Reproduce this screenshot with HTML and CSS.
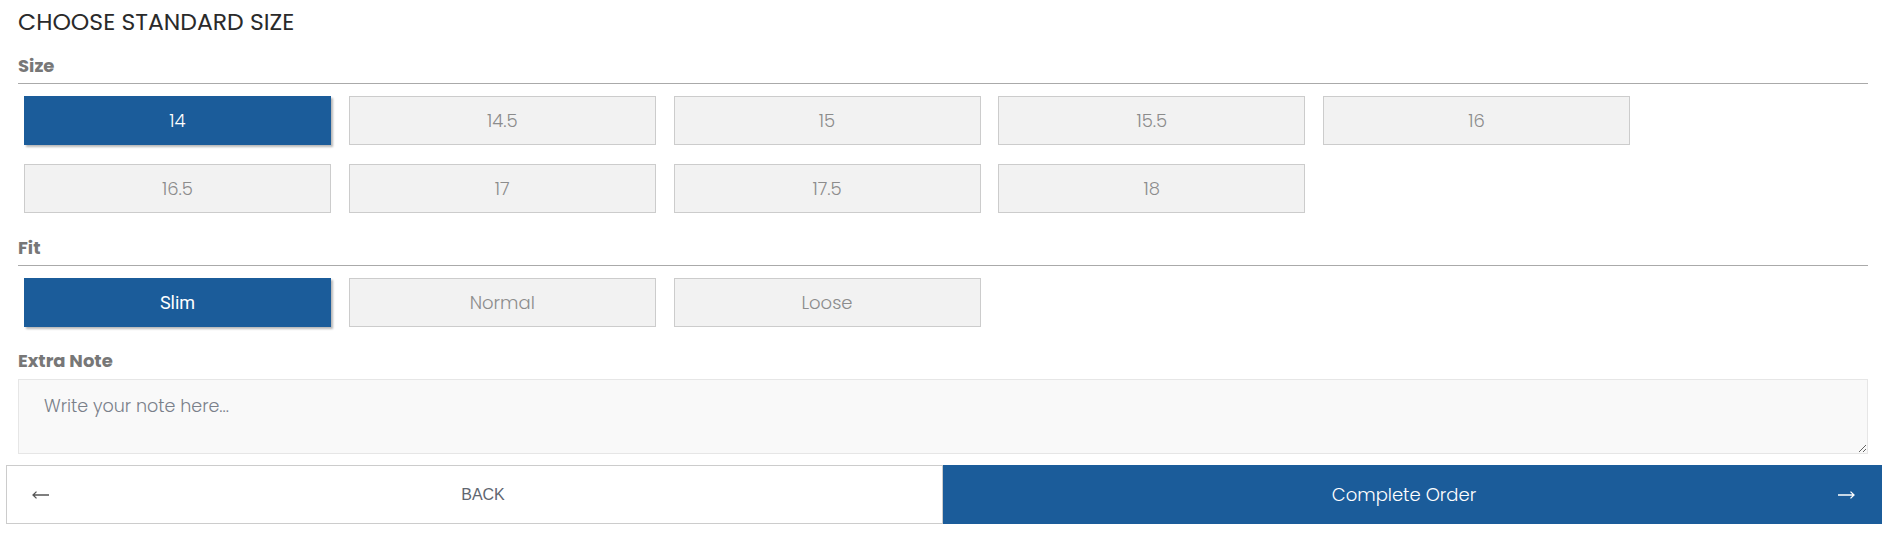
FILE: index.html
```html
<!DOCTYPE html>
<html>
<head>
<meta charset="utf-8">
<link rel="stylesheet" href="styles.css">
</head>
<body>
<div class="page">
  <h2 class="title">CHOOSE STANDARD SIZE</h2>
  <div class="label first">Size</div>
  <div class="options">
    <button class="opt active">14</button>
    <button class="opt">14.5</button>
    <button class="opt">15</button>
    <button class="opt">15.5</button>
    <button class="opt">16</button>
    <button class="opt">16.5</button>
    <button class="opt">17</button>
    <button class="opt">17.5</button>
    <button class="opt">18</button>
  </div>
  <div class="label">Fit</div>
  <div class="options">
    <button class="opt active alt">Slim</button>
    <button class="opt">Normal</button>
    <button class="opt">Loose</button>
  </div>
  <div class="label plain">Extra Note</div>
  <textarea class="note" placeholder="Write your note here..."></textarea>
</div>
<div class="actions">
  <button class="back">
    <svg class="arrow" width="17" height="10" viewBox="0 0 17 10"><path d="M17 5H1.2M4.5 1.6L1 5l3.5 3.4" fill="none" stroke="#555" stroke-width="1.3"/></svg>
    <span class="btxt">BACK</span>
  </button>
  <button class="done">
    <span class="btxt">Complete Order</span>
    <svg class="arrow" width="17" height="10" viewBox="0 0 17 10"><path d="M0 5h15.8M12.5 1.6L16 5l-3.5 3.4" fill="none" stroke="#fff" stroke-width="1.3"/></svg>
  </button>
</div>
</body>
</html>
```
FILE: styles.css
```css
* { box-sizing: border-box; }
body {
  margin: 0;
  font-family: "Poppins", "Inter", "Open Sans", sans-serif;
  background: #fff;
}
.page {
  padding: 7px 18px 0 18px;
  display: flex;
  flex-direction: column;
}
.title {
  margin: 0;
  font-size: 23.5px;
  line-height: 30px;
  font-weight: 400;
  color: #2a2a2a;
}
.label {
  margin-top: 23px;
  font-size: 18px;
  line-height: 24px;
  font-weight: 700;
  color: #777;
  padding-bottom: 5px;
  border-bottom: 1px solid #aaa;
}
.label.first { margin-top: 17px; }
.label.plain {
  margin-top: 22px;
  border-bottom: none;
  padding-bottom: 0;
}
.options {
  margin-top: 12px;
  padding-left: 6px;
  display: grid;
  grid-template-columns: repeat(5, 307px);
  column-gap: 17.75px;
  row-gap: 19px;
}
.opt {
  height: 49px;
  border: 1px solid #ccc;
  background: #f2f2f2;
  color: #8c8c8c;
  font-family: "Poppins", "Inter", "Open Sans", sans-serif;
  font-size: 18px;
  font-weight: 300;
  padding: 0;
}
.opt.active {
  background: #1b5c9a;
  border-color: #1b5c9a;
  color: #fff;
  box-shadow: 2px 2px 2px rgba(0, 0, 0, 0.28);
}
.opt.alt {
  font-family: "Roboto", "Liberation Sans", sans-serif;
  font-weight: 400;
  font-size: 18px;
}
.note {
  margin-top: 6px;
  height: 75px;
  width: 100%;
  background: #f9f9f9;
  border: 1px solid #e6e6e6;
  padding: 13px 25px;
  font-family: "Poppins", "Inter", "Open Sans", sans-serif;
  font-size: 17.5px;
  font-weight: 300;
  resize: vertical;
  outline: none;
}
.note::placeholder { color: #7a808a; }
.actions {
  margin: 11px 4px 0 6px;
  display: flex;
  height: 59px;
}
.back, .done {
  flex: 1;
  display: flex;
  align-items: center;
  margin: 0;
}
.back {
  padding: 0 25px 0 25px;
  background: #fff;
  border: 1px solid #ccc;
  color: #5f6670;
  font-family: "Liberation Sans", Arial, sans-serif;
  font-size: 16px;
}
.done {
  padding: 0 27px 0 27px;
  background: #1b5c9a;
  border: none;
  color: #fff;
  font-family: "Poppins", "Inter", "Open Sans", sans-serif;
  font-weight: 300;
  font-size: 18px;
}
.btxt { flex: 1; text-align: center; }
.arrow { display: block; flex: none; }
```
